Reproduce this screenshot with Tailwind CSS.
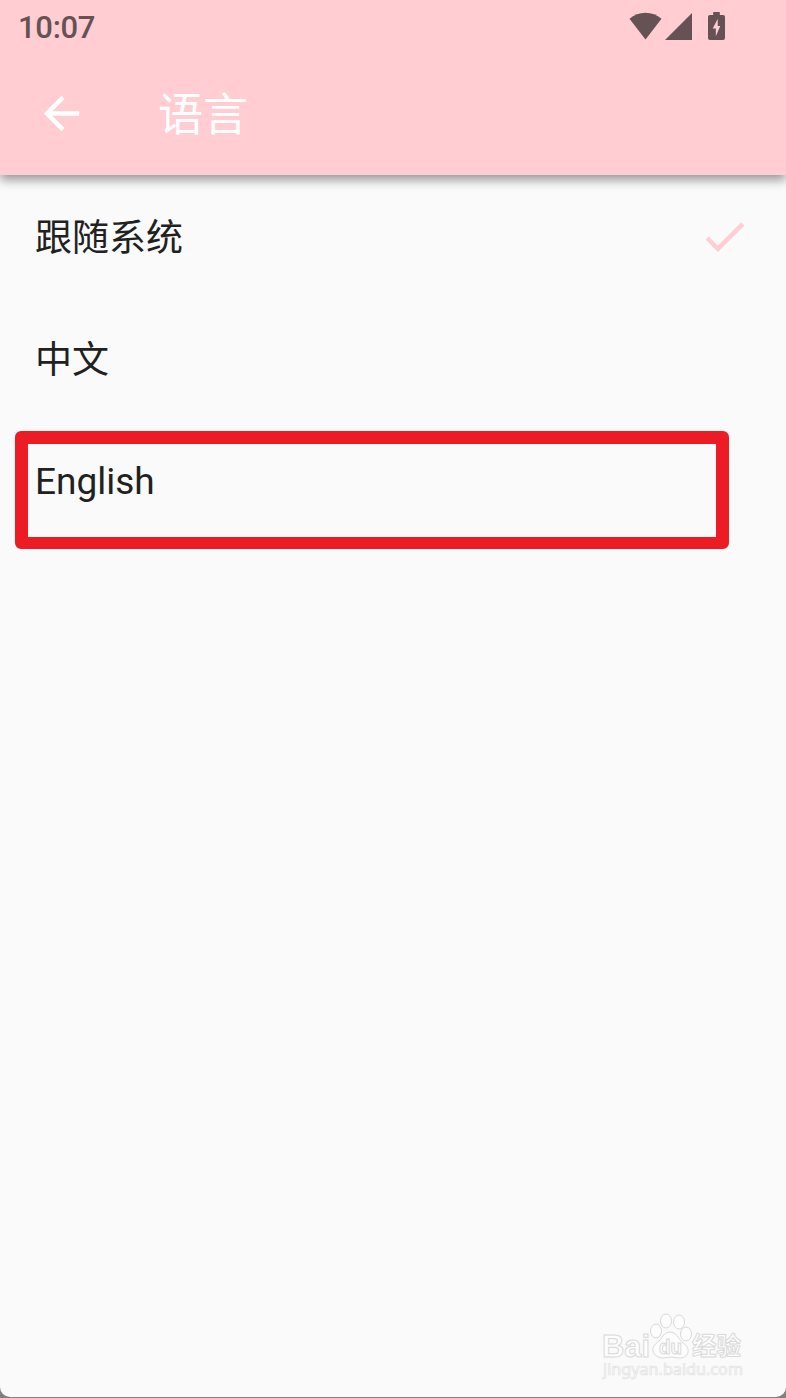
<!DOCTYPE html>
<html lang="zh-CN">
<head>
    <meta charset="UTF-8">
    <meta name="viewport" content="width=device-width, initial-scale=1.0">
    <title>语言</title>
    <script src="https://cdn.jsdelivr.net/npm/@tailwindcss/browser@4"></script>
</head>
<body class="bg-[#808080] h-screen overflow-hidden font-['Roboto','Noto_Sans_CJK_SC',sans-serif]">

    <!-- Screen -->
    <div class="relative flex flex-col h-[1397px] bg-[#fafafa] rounded-b-[10px] overflow-hidden">

        <!-- Header -->
        <header class="relative h-[175px] shrink-0 bg-[#ffcdd2] shadow-[0_5px_10px_rgba(0,0,0,0.4)]">
            <!-- Status bar -->
            <div class="h-[53px] pl-[18px] pr-[61px] flex items-center justify-between text-[#665254]">
                <span class="pt-[2px] text-[31px] leading-none font-medium tracking-[-0.3px]">10:07</span>
                <div class="flex items-start h-[31px]">
                    <svg class="w-[33px] h-[28px] mt-[1px]" viewBox="0 0 33 28" fill="currentColor"><path d="M16.5 27.5L.5 6.8C5 3 10.500.8 16.500.8S28 3 32.500 6.800z"/></svg>
                    <svg class="w-[27px] h-[27px] ml-[3px] mt-[2px]" viewBox="0 0 28 28" fill="currentColor"><path d="M0 28L28 0v28z"/></svg>
                    <svg class="w-[17px] h-[28px] ml-[16px] mt-[1px]" viewBox="0 0 18 29" preserveAspectRatio="none" fill="currentColor" fill-rule="evenodd"><path d="M5.500 0h7v3H16a2 2 0 0 1 2 2v22a2 2 0 0 1-2 2H2a2 2 0 0 1-2-2V5a2 2 0 0 1 2-2h3.500zM10.300 7L5 17h3.300v8L13 14.500H10.300z"/></svg>
                </div>
            </div>
            <!-- Toolbar -->
            <div class="h-[121px] pl-[35px] flex items-center text-white">
                <svg class="w-[53px] h-[53px]" viewBox="0 0 24 24" fill="currentColor"><path d="M20 11H7.830l5.590-5.590L12 4l-8 8 8 8 1.410-1.410L7.830 13H20v-2z"/></svg>
                <h1 class="ml-[70px] pt-[4px] text-[45px] leading-none">语言</h1>
            </div>
        </header>

        <!-- Language list -->
        <ul class="text-[37px] leading-none text-[#212121]">
            <li class="h-[122.5px] pl-[35px] pr-[35px] flex items-center justify-between">
                <span class="pt-[4px]">跟随系统</span>
                <svg class="w-[53px] h-[53px] text-[#ffcdd2]" viewBox="0 0 24 24" fill="currentColor"><path d="M9 16.170L4.830 12l-1.420 1.410L9 19 21 7l-1.410-1.410z"/></svg>
            </li>
            <li class="h-[122.5px] pl-[35px] flex items-center"><span class="pt-[4px]">中文</span></li>
            <li class="h-[122.5px] pl-[35px] flex items-center"><span class="pt-[1px]">English</span></li>
        </ul>

        <!-- Highlight box -->
        <svg class="absolute left-[15px] top-[431px] w-[714px] h-[118px]" viewBox="0 0 714 118" fill="#ed1c24" fill-rule="evenodd"><path d="M6 0h702a6 6 0 0 1 6 6v106a6 6 0 0 1-6 6H6a6 6 0 0 1-6-6V6a6 6 0 0 1 6-6zM13 13v93h688V13z"/></svg>

        <!-- Watermark -->
        <svg class="absolute left-[595px] top-[1308px] w-[160px] h-[76px]" viewBox="0 0 160 76" fill="#fdfdfd" stroke="#d9d9d9" stroke-width="1" font-family="Liberation Sans, Noto Sans CJK SC, sans-serif">
            <text x="7" y="49" font-size="32" font-weight="bold" textLength="48" lengthAdjust="spacingAndGlyphs">Bai</text>
            <ellipse cx="61" cy="23" rx="5.500" ry="7"/>
            <ellipse cx="71" cy="13" rx="5.500" ry="7"/>
            <ellipse cx="84" cy="14" rx="5.500" ry="7"/>
            <ellipse cx="91" cy="26" rx="5.500" ry="7"/>
            <path d="M75 24c6 0 8 6 12 10 4 3 7 6 6 10-1 5-5 6-9 6-3 0-5-1-8-1s-5 1-8 1c-5 0-9-3-10-7-1-5 3-7 6-10 4-4 5-9 11-9z"/>
            <text x="64" y="46" font-size="20" font-weight="bold" textLength="23" lengthAdjust="spacingAndGlyphs">du</text>
            <text x="97" y="47" font-size="25" font-weight="bold" textLength="49" lengthAdjust="spacingAndGlyphs">经验</text>
            <text x="8" y="67" font-size="16" font-family="Noto Sans, sans-serif" stroke="#e2e2e2" stroke-width="0.700" textLength="140" lengthAdjust="spacingAndGlyphs">jingyan.baidu.com</text>
        </svg>
    </div>

</body>
</html>
